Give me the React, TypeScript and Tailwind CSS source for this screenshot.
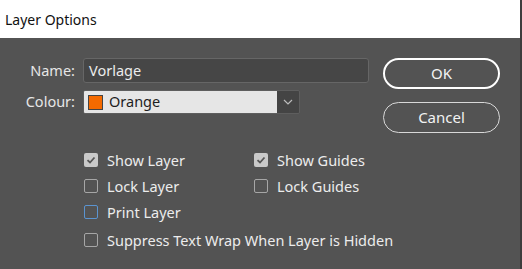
import React from "react";

const font = { fontFamily: '"Noto Sans", "Open Sans", sans-serif' };

function Box({ checked, focus }: { checked?: boolean; focus?: boolean }) {
  if (checked) {
    return (
      <span className="flex h-[14px] w-[14px] shrink-0 items-center justify-center rounded-[2px] bg-[#c9c9c9]">
        <svg width="10" height="10" viewBox="0 0 10 10">
          <path d="M1.5 5.2 L4 7.5 L8.5 2.5" fill="none" stroke="#555" strokeWidth="1.8" />
        </svg>
      </span>
    );
  }
  return (
    <span
      className={
        "block h-[14px] w-[14px] shrink-0 rounded-[2px] border " +
        (focus ? "border-[#5b94d0]" : "border-[#a6a6a6]")
      }
    />
  );
}

function Check({ label, checked, focus }: { label: string; checked?: boolean; focus?: boolean }) {
  return (
    <div className="flex h-[14px] items-center gap-[9px] whitespace-nowrap">
      <Box checked={checked} focus={focus} />
      <span className="text-[14.5px] leading-none text-[#ececec]">{label}</span>
    </div>
  );
}

export default function App() {
  return (
    <div className="flex h-[269px] w-[522px] flex-col overflow-hidden" style={font}>
      <div className="flex h-[38px] items-center border-r-2 border-[#3d3d3d] bg-white pl-[5px]">
        <span className="text-[14px] text-[#111]">Layer Options</span>
      </div>
      <div className="flex flex-1 border-r-2 border-[#3d3d3d] bg-[#535353]">
        <div className="flex w-[369px] shrink-0 flex-col pt-[20px]">
          <div className="flex items-center gap-[8px]">
            <span className="w-[75px] text-right text-[14.5px] text-[#e6e6e6]">Name:</span>
            <div className="flex h-[25px] w-[286px] items-center rounded-[3px] border border-[#666] bg-[#464646] pl-[5px] text-[14.5px] text-[#ececec]">
              Vorlage
            </div>
          </div>
          <div className="mt-[7px] flex items-center gap-[8px]">
            <span className="w-[75px] text-right text-[14.5px] text-[#e6e6e6]">Colour:</span>
            <div className="flex h-[24px] w-[217px] overflow-hidden rounded-[2px] border border-[#5e5e5e]">
              <div className="flex flex-1 items-center gap-[6px] bg-[#e6e6e6] pl-[4px]">
                <span className="h-[15px] w-[15px] border border-[#444] bg-[#f56a00]" />
                <span className="text-[14.5px] text-[#1e1e1e]">Orange</span>
              </div>
              <div className="flex w-[22px] items-center justify-center bg-[#444]">
                <svg width="10" height="6" viewBox="0 0 10 6">
                  <path d="M1 1 L5 5 L9 1" fill="none" stroke="#bbb" strokeWidth="1.2" />
                </svg>
              </div>
            </div>
          </div>
          <div className="ml-[84px] mt-[39px] flex flex-col">
            <div className="flex">
              <div className="w-[170px]">
                <Check label="Show Layer" checked />
              </div>
              <Check label="Show Guides" checked />
            </div>
            <div className="mt-[12px] flex">
              <div className="w-[170px]">
                <Check label="Lock Layer" />
              </div>
              <Check label="Lock Guides" />
            </div>
            <div className="mt-[12px]">
              <Check label="Print Layer" focus />
            </div>
            <div className="mt-[14px]">
              <Check label="Suppress Text Wrap When Layer is Hidden" />
            </div>
          </div>
        </div>
        <div className="ml-[14px] flex flex-col gap-[13px] pt-[20px]">
          <button className="flex h-[31px] w-[117px] items-center justify-center rounded-full border-2 border-white text-[15px] text-[#f2f2f2]">
            OK
          </button>
          <button className="flex h-[31px] w-[117px] items-center justify-center rounded-full border border-[#d8d8d8] text-[15px] text-[#f2f2f2]">
            Cancel
          </button>
        </div>
      </div>
    </div>
  );
}
